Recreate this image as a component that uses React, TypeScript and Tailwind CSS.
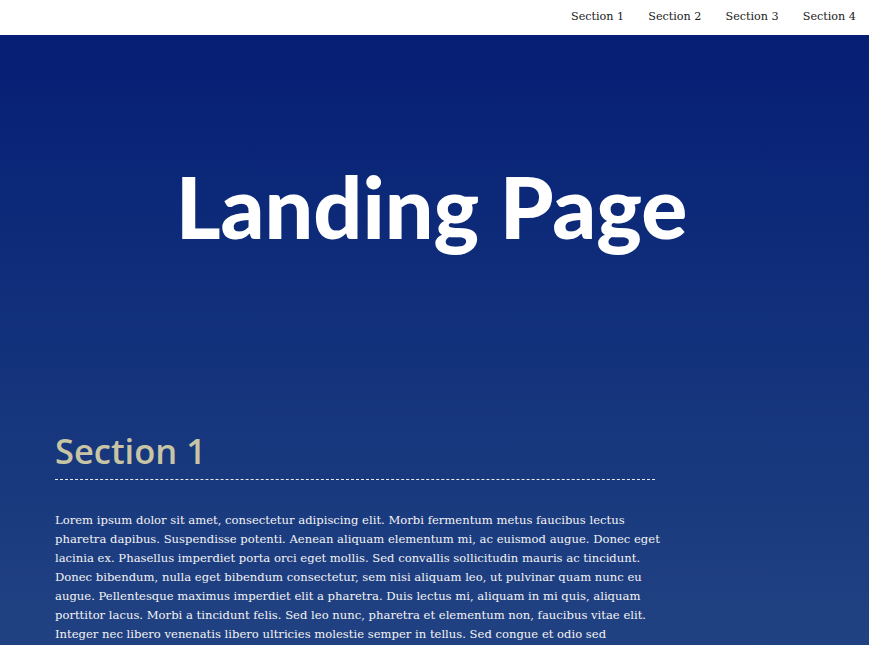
import React from "react";

const lines1 = [
  "Lorem ipsum dolor sit amet, consectetur adipiscing elit. Morbi fermentum metus faucibus lectus",
  "pharetra dapibus. Suspendisse potenti. Aenean aliquam elementum mi, ac euismod augue. Donec eget",
  "lacinia ex. Phasellus imperdiet porta orci eget mollis. Sed convallis sollicitudin mauris ac tincidunt.",
  "Donec bibendum, nulla eget bibendum consectetur, sem nisi aliquam leo, ut pulvinar quam nunc eu",
  "augue. Pellentesque maximus imperdiet elit a pharetra. Duis lectus mi, aliquam in mi quis, aliquam",
  "porttitor lacus. Morbi a tincidunt felis. Sed leo nunc, pharetra et elementum non, faucibus vitae elit.",
  "Integer nec libero venenatis libero ultricies molestie semper in tellus. Sed congue et odio sed",
  "euismod.",
];

const para2 =
  "Aliquam a convallis justo. Vivamus venenatis, erat eget pulvinar gravida, ipsum lacus aliquet velit, vel luctus diam ipsum a diam. Cras eu tincidunt arcu, vitae rhoncus purus. Vestibulum fermentum consectetur porttitor. Suspendisse imperdiet porttitor tortor, eget elementum tortor mollis non.";

export default function App() {
  return (
    <div
      className="min-h-screen bg-gradient-to-b from-[#061b74] to-[#2a4b85] text-[#f4f4f4]"
      style={{ fontFamily: '"DejaVu Serif", "Liberation Serif", serif' }}
    >
      <header className="fixed top-0 left-0 right-0 h-[35px] bg-white flex justify-end items-center pr-[13px] z-10">
        <nav className="flex gap-[24px] text-[11.2px] text-[#1a1a1a]">
          <a className="block">Section 1</a>
          <a className="block">Section 2</a>
          <a className="block">Section 3</a>
          <a className="block">Section 4</a>
        </nav>
      </header>
      <main className="pt-[35px]">
        <div className="h-[380px] flex items-start justify-center pt-[128px] pr-[6px]">
          <h1
            className="text-[86px] leading-none font-black text-white"
            style={{ fontFamily: 'Lato, "Noto Sans", sans-serif' }}
          >
            Landing Page
          </h1>
        </div>
        <section className="pl-[55px] pb-20">
          <div className="w-[600px]">
            <h2
              className="text-[34.5px] font-semibold leading-none text-[#c8c5a5] pt-[19px] pb-[10px] border-b border-dashed border-[#e8e8e8]"
              style={{ fontFamily: '"Open Sans", "Noto Sans", sans-serif' }}
            >
              Section 1
            </h2>
            <p className="mt-[31px] text-[11.6px] leading-[19px]">
              {lines1.map((l, i) => (
                <span key={i} className="block whitespace-nowrap">
                  {l}
                </span>
              ))}
            </p>
            <p className="mt-[19px] text-[11.6px] leading-[19px]">{para2}</p>
          </div>
        </section>
      </main>
    </div>
  );
}
